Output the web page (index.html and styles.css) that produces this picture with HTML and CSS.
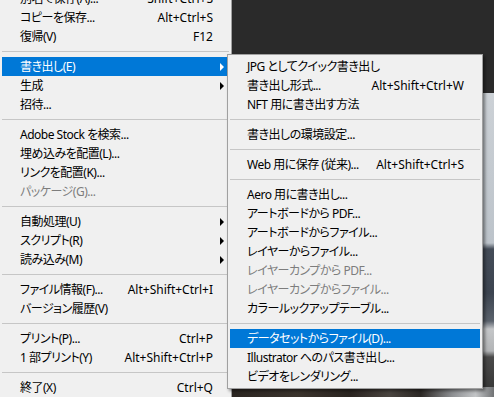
FILE: index.html
```html
<!DOCTYPE html>
<html lang="ja">
  <head>
    <meta charset="utf-8" />
    <title>ファイル メニュー</title>
    <meta name="viewport" content="width=device-width, initial-scale=1.0" />
    <link rel="stylesheet" href="styles.css">
  </head>
  <body>
    <div class="desk">
      <!-- document behind the menus -->
      <div class="photo"></div>

      <div class="menu menu-file">
        <div class="item"><span>別名で保存(A)...</span><span class="key">Shift+Ctrl+S</span></div>
        <div class="item"><span>コピーを保存...</span><span class="key">Alt+Ctrl+S</span></div>
        <div class="item"><span>復帰(V)</span><span class="key">F12</span></div>
        <div class="sep"></div>
        <div class="item active"><span>書き出し(E)</span><span class="key"></span><span class="arrow"></span></div>
        <div class="item"><span>生成</span><span class="key"></span><span class="arrow"></span></div>
        <div class="item"><span>招待...</span></div>
        <div class="sep"></div>
        <div class="item"><span>Adobe Stock を検索...</span></div>
        <div class="item"><span>埋め込みを配置(L)...</span></div>
        <div class="item"><span>リンクを配置(K)...</span></div>
        <div class="item disabled"><span>パッケージ(G)...</span></div>
        <div class="sep"></div>
        <div class="item"><span>自動処理(U)</span><span class="key"></span><span class="arrow"></span></div>
        <div class="item"><span>スクリプト(R)</span><span class="key"></span><span class="arrow"></span></div>
        <div class="item"><span>読み込み(M)</span><span class="key"></span><span class="arrow"></span></div>
        <div class="sep"></div>
        <div class="item"><span>ファイル情報(F)...</span><span class="key">Alt+Shift+Ctrl+I</span></div>
        <div class="item"><span>バージョン履歴(V)</span></div>
        <div class="sep"></div>
        <div class="item"><span>プリント(P)...</span><span class="key">Ctrl+P</span></div>
        <div class="item"><span>1 部プリント(Y)</span><span class="key">Alt+Shift+Ctrl+P</span></div>
        <div class="sep"></div>
        <div class="item"><span>終了(X)</span><span class="key">Ctrl+Q</span></div>
      </div>

      <div class="menu menu-export">
        <div class="item"><span>JPG としてクイック書き出し</span></div>
        <div class="item"><span>書き出し形式...</span><span class="key">Alt+Shift+Ctrl+W</span></div>
        <div class="item"><span>NFT 用に書き出す方法</span></div>
        <div class="sep"></div>
        <div class="item"><span>書き出しの環境設定...</span></div>
        <div class="sep"></div>
        <div class="item"><span>Web 用に保存 (従来)...</span><span class="key">Alt+Shift+Ctrl+S</span></div>
        <div class="sep"></div>
        <div class="item"><span>Aero 用に書き出し...</span></div>
        <div class="item"><span>アートボードから PDF...</span></div>
        <div class="item"><span>アートボードからファイル...</span></div>
        <div class="item"><span>レイヤーからファイル...</span></div>
        <div class="item disabled"><span>レイヤーカンプから PDF...</span></div>
        <div class="item disabled"><span>レイヤーカンプからファイル...</span></div>
        <div class="item"><span>カラールックアップテーブル...</span></div>
        <div class="sep"></div>
        <div class="item active"><span>データセットからファイル(D)...</span></div>
        <div class="item"><span>Illustrator へのパス書き出し...</span></div>
        <div class="item"><span>ビデオをレンダリング...</span></div>
      </div>
    </div>
  </body>
</html>
```

FILE: styles.css
```css
html,
body {
  margin: 0;
  height: 100%;
  background: #2a2a2a;
  font-family: "Noto Sans", "Noto Sans CJK JP", sans-serif;
  font-size: 12px;
  font-feature-settings: "palt";
  --menu-bg: #f0f0f0;
  --menu-border: #a0a0a0;
  --accent: #0078d7;
}

.desk {
  position: relative;
  width: 100%;
  height: 100%;
  overflow: hidden;
}

/* photo on the canvas, mostly hidden by the menus */
.photo {
  position: absolute;
  left: 232px;
  top: 93px;
  right: 0;
  bottom: 0;
  background:
    linear-gradient(to right, #2b2521 0%, #3b342d 25%, #2a2420 45%, #4a4540 60%, #2c2825 72%, #8d8f92 84%, #c3c5c7 93%, #707274 100%) bottom / 100% 10px no-repeat,
    linear-gradient(to bottom, #ccd1d6 0, #bcc3ca 150px, #444c58 156px, #3c4450 200px, #5a626c 228px, #c4c6c8 236px, #b2b4b6 258px, #4a4a4a 264px, #333333 100%);
}

.menu {
  position: absolute;
  background: var(--menu-bg);
  border: 1px solid var(--menu-border);
  padding: 2px;
  color: #000;
}

.menu-file {
  left: -1px;
  top: -14px;
  width: 227px;
}

.menu-export {
  left: 227px;
  top: 54px;
  width: 250px;
  box-shadow: 2px 2px 3px rgba(0, 0, 0, 0.45);
}

.item {
  display: grid;
  grid-template-columns: 1fr auto 16px;
  height: 19px;
  line-height: 19px;
  padding-left: 18px;
  white-space: nowrap;
}

/* the UI font has narrow kana */
.item > span:first-child {
  letter-spacing: -0.5px;
}

.menu-export .item {
  padding-left: 17px;
}

.item .key {
  text-align: right;
}

.item.active {
  background: var(--accent);
  color: #fff;
}

.item.disabled {
  color: #7d7d7d;
}

.arrow {
  align-self: center;
  margin-left: 7px;
  width: 0;
  height: 0;
  border-left: 4px solid currentColor;
  border-top: 4px solid transparent;
  border-bottom: 4px solid transparent;
}

.sep {
  height: 11px;
  background: linear-gradient(#c6c6c6, #c6c6c6) 0 5px / 100% 1px no-repeat;
}
```
